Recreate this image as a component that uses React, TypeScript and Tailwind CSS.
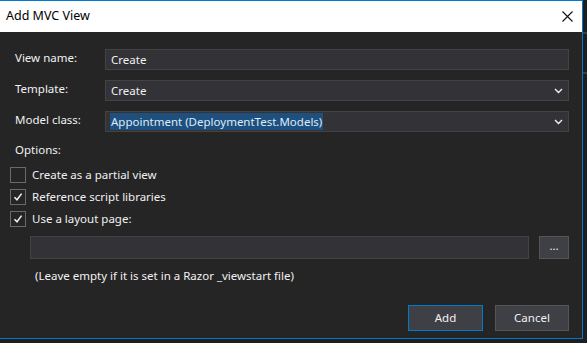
import React from "react";

const font = { fontFamily: '"Noto Sans", "Open Sans", sans-serif' };

function Chevron() {
  return (
    <svg width="9" height="6" viewBox="0 0 9 6" className="mr-[5px]">
      <path d="M1 1 L4.5 4.5 L8 1" stroke="#f1f1f1" strokeWidth="1.4" fill="none" />
    </svg>
  );
}

function Check({ checked }: { checked: boolean }) {
  return (
    <div className="w-[16px] h-[16px] border border-[#6a6a6a] bg-[#252526] flex items-center justify-center">
      {checked && (
        <svg width="10" height="10" viewBox="0 0 10 10">
          <path d="M1.5 5.2 L4 7.8 L8.6 1.6" stroke="#f1f1f1" strokeWidth="1.5" fill="none" />
        </svg>
      )}
    </div>
  );
}

export default function App() {
  return (
    <div className="w-[587px] h-[343px] bg-[#1e1e1e] relative overflow-hidden" style={font}>
      <div className="absolute right-0 top-[32px] w-[4px] h-[2px] bg-[#3f3f46]" />
      <div className="absolute right-0 top-[72px] w-[4px] h-[2px] bg-[#3f3f46]" />
      <div className="w-[583px] h-[339px] border-t border-r border-b border-[#007acc] bg-[#252526] flex flex-col text-[11.5px] text-[#f1f1f1]">
        <div className="h-[31px] bg-white flex items-center justify-between pl-[6px] pr-[9px] text-black text-[12.5px]">
          <span>Add MVC View</span>
          <svg width="11" height="11" viewBox="0 0 11 11">
            <path d="M0.5 0.5 L10.5 10.5 M10.5 0.5 L0.5 10.5" stroke="#111" strokeWidth="1.1" />
          </svg>
        </div>
        <div className="flex-1 flex flex-col pl-[15px] pr-[13px] pt-[17px]">
          <div className="flex items-center h-[21px]">
            <div className="w-[90px] leading-none -mt-[3px]">View name:</div>
            <div className="flex-1 h-[21px] bg-[#333337] border border-[#434346] flex items-center px-[5px]">Create</div>
          </div>
          <div className="flex items-center h-[21px] mt-[10px]">
            <div className="w-[90px] leading-none -mt-[3px]">Template:</div>
            <div className="flex-1 h-[21px] bg-[#333337] border border-[#434346] flex items-center justify-between pl-[5px]">
              <span>Create</span>
              <Chevron />
            </div>
          </div>
          <div className="flex items-center h-[21px] mt-[10px]">
            <div className="w-[90px] leading-none -mt-[3px]">Model class:</div>
            <div className="flex-1 h-[21px] bg-[#333337] border border-[#434346] flex items-center justify-between pl-[4px]">
              <span className="bg-[#1f4f7d] text-[#dcebfb] px-[1px] leading-[17px]">Appointment (DeploymentTest.Models)</span>
              <Chevron />
            </div>
          </div>
          <div className="mt-[10px] h-[16px] leading-[16px]">Options:</div>
          <div className="flex flex-col -ml-[5px] mt-[9px] gap-[6px]">
            <div className="flex items-center gap-[6px] h-[16px]">
              <Check checked={false} />
              <span>Create as a partial view</span>
            </div>
            <div className="flex items-center gap-[6px] h-[16px]">
              <Check checked={true} />
              <span>Reference script libraries</span>
            </div>
            <div className="flex items-center gap-[6px] h-[16px]">
              <Check checked={true} />
              <span>Use a layout page:</span>
            </div>
          </div>
          <div className="flex items-center mt-[9px] ml-[15px] h-[23px]">
            <div className="flex-1 h-[23px] bg-[#333337] border border-[#434346]" />
            <div className="w-[30px] h-[23px] ml-[10px] bg-[#3f3f46] border border-[#555555] flex items-center justify-center leading-none pb-[3px]">...</div>
          </div>
          <div className="ml-[20px] mt-[9px] leading-[16px]">(Leave empty if it is set in a Razor _viewstart file)</div>
          <div className="flex justify-end gap-[12px] mt-[21px]">
            <div className="w-[75px] h-[26px] bg-[#3f3f46] border border-[#007acc] flex items-center justify-center">Add</div>
            <div className="w-[74px] h-[26px] bg-[#3f3f46] border border-[#555555] flex items-center justify-center">Cancel</div>
          </div>
        </div>
      </div>
    </div>
  );
}
